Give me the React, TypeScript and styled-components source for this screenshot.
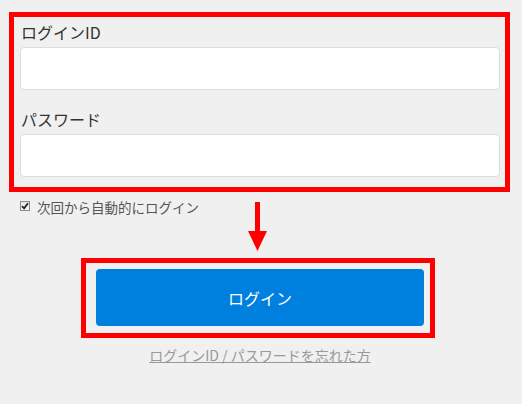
import React from "react";
import styled, { createGlobalStyle } from "styled-components";

const Global = createGlobalStyle`
  html, body { margin: 0; padding: 0; background: #f0f0f0; }
  body {
    width: 522px;
    height: 404px;
    overflow: hidden;
    font-family: "Noto Sans CJK JP", "Noto Sans", sans-serif;
  }
  * { box-sizing: border-box; }
`;

const Page = styled.div`
  display: flex;
  flex-direction: column;
  padding-top: 12px;
`;

const HighlightBox = styled.div<{ $left: number; $width: number; $height: number }>`
  margin-left: ${(p) => p.$left}px;
  width: ${(p) => p.$width}px;
  height: ${(p) => p.$height}px;
  border: 5px solid #ff0000;
`;

const FieldsBox = styled(HighlightBox)`
  display: flex;
  flex-direction: column;
  padding: 3px 5px 0 6px;
`;

const Label = styled.label<{ $top?: number }>`
  display: block;
  margin-top: ${(p) => p.$top ?? 0}px;
  padding-left: 1px;
  height: 24px;
  line-height: 24px;
  font-size: 16px;
  color: #333;
`;

const Input = styled.input`
  display: block;
  margin-top: 3px;
  width: 100%;
  height: 43px;
  background: #fff;
  border: 1px solid #dcdcdc;
  border-radius: 4px;
  outline: none;
`;

const Middle = styled.div`
  display: grid;
  height: 66px;
`;

const RememberRow = styled.label`
  grid-area: 1 / 1;
  align-self: start;
  justify-self: start;
  display: flex;
  align-items: center;
  margin-top: 5px;
  padding-left: 20px;
  height: 20px;
  font-size: 13.5px;
  color: #555;
`;

const Check = styled.span`
  display: inline-flex;
  align-items: center;
  justify-content: center;
  width: 10px;
  height: 10px;
  margin-right: 7px;
  margin-top: -3px;
  border: 1px solid #8a8a8a;
  background: linear-gradient(#e6e6e6, #fafafa);
`;

const ArrowWrap = styled.div`
  grid-area: 1 / 1;
  justify-self: start;
  align-self: start;
  margin-left: 248px;
  margin-top: 10px;
  width: 19px;
  height: 49px;
  line-height: 0;
`;

const ButtonBox = styled(HighlightBox)`
  padding: 6px 6px 7px 10px;
`;

const LoginButton = styled.button`
  display: flex;
  align-items: center;
  justify-content: center;
  width: 328px;
  height: 57px;
  border: none;
  border-radius: 4px;
  background: #0080de;
  color: #fff;
  font-family: "Noto Sans CJK JP", "Noto Sans", sans-serif;
  font-size: 16px;
  cursor: pointer;
`;

const Forgot = styled.a`
  align-self: center;
  margin-top: 7px;
  margin-right: 2px;
  height: 20px;
  line-height: 20px;
  font-size: 14px;
  color: #999;
  text-decoration: underline;
  text-underline-offset: 1px;
`;

export default function App() {
  return (
    <>
      <Global />
      <Page>
        <FieldsBox $left={9} $width={501} $height={180}>
          <Label>ログインID</Label>
          <Input type="text" />
          <Label $top={17}>パスワード</Label>
          <Input type="password" />
        </FieldsBox>
        <Middle>
          <RememberRow>
            <Check>
              <svg width="8" height="8" viewBox="0 0 8 8">
                <path d="M1 4.2 L3.1 6.3 L7 1.2" fill="none" stroke="#222" strokeWidth="1.8" />
              </svg>
            </Check>
            次回から自動的にログイン
          </RememberRow>
          <ArrowWrap>
            <svg width="19" height="49" viewBox="0 0 19 49">
              <rect x="7" y="0" width="5" height="30" fill="#ff0000" />
              <polygon points="0,29 19,29 9.5,49" fill="#ff0000" />
            </svg>
          </ArrowWrap>
        </Middle>
        <ButtonBox $left={81} $width={354} $height={80}>
          <LoginButton type="button">ログイン</LoginButton>
        </ButtonBox>
        <Forgot href="#">ログインID / パスワードを忘れた方</Forgot>
      </Page>
    </>
  );
}
